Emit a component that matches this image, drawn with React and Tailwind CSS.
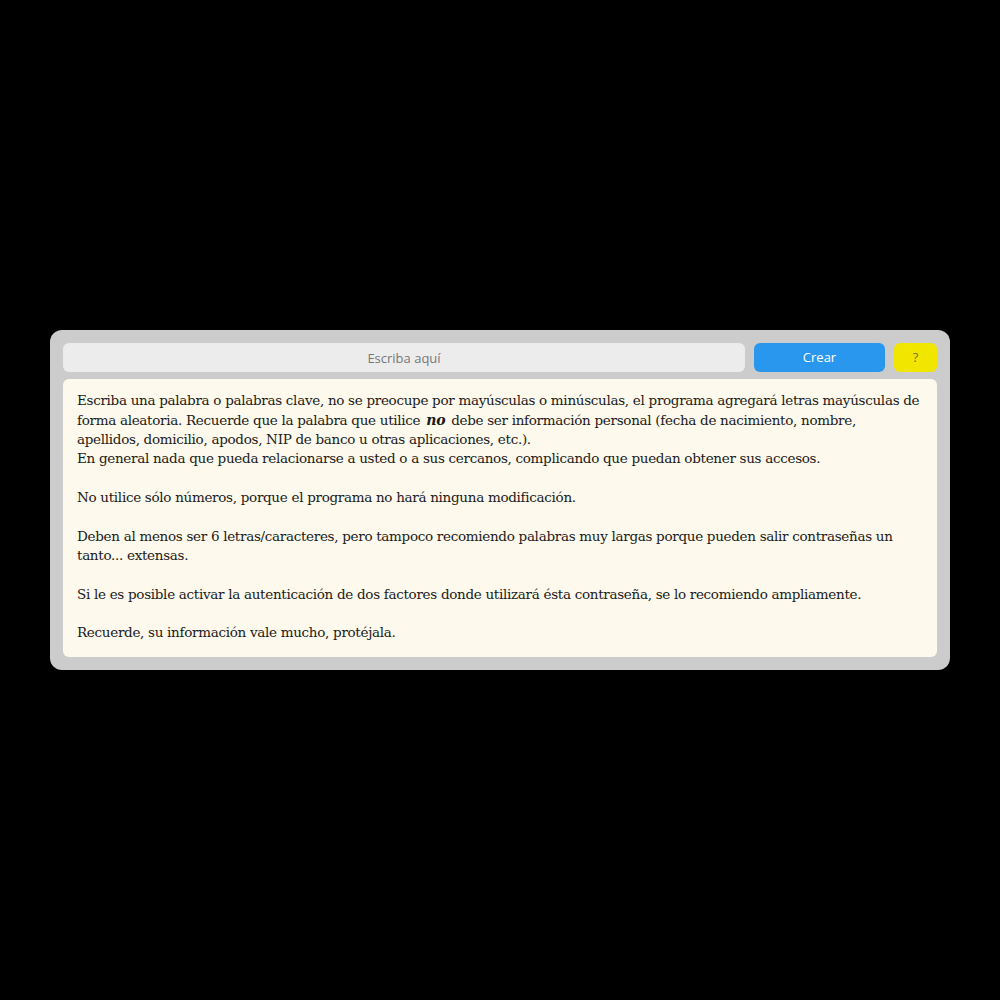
import React from 'react';

export default function App() {
    return (
        <div className="w-[1000px] h-[1000px] bg-black flex items-center justify-center">
            <div className="w-[900px] bg-[#cccccc] rounded-[12px] p-[13px] flex flex-col gap-[7px]">

                {/* Barra de entrada */}
                <div className="flex items-center gap-[9px] h-[29px]" style={{ fontFamily: '"Open Sans", "Noto Sans", sans-serif' }}>
                    <input
                        type="text"
                        placeholder="Escriba aquí"
                        className="flex-1 h-full bg-[#ececec] rounded-[6px] text-center text-[13px] text-[#555] placeholder-[#777] outline-none"
                    />
                    <button className="w-[131px] h-full bg-[#2a97ef] rounded-[6px] text-white text-[13px]">Crear</button>
                    <button className="w-[43px] h-full bg-[#f0e600] rounded-[6px] text-[#7a7400] text-[13px]">?</button>
                </div>

                {/* Texto de ayuda */}
                <div
                    className="bg-[#fdf9ec] rounded-[6px] pl-[14px] pr-[15px] pt-[12px] pb-[14px] text-[13.5px] tracking-[-0.3px] leading-[19.33px] text-[#1a1a1a]"
                    style={{ fontFamily: '"DejaVu Serif", "Liberation Serif", serif' }}
                >
                    Escriba una palabra o palabras clave, no se preocupe por mayúsculas o minúsculas, el programa agregará letras mayúsculas de forma aleatoria. Recuerde que la palabra que utilice <b className="italic text-[14px] mx-[2px]">no</b> debe ser información personal (fecha de nacimiento, nombre, apellidos, domicilio, apodos, NIP de banco u otras aplicaciones, etc.).
                    <br />
                    En general nada que pueda relacionarse a usted o a sus cercanos, complicando que puedan obtener sus accesos.
                    <br /><br />
                    No utilice sólo números, porque el programa no hará ninguna modificación.
                    <br /><br />
                    Deben al menos ser 6 letras/caracteres, pero tampoco recomiendo palabras muy largas porque pueden salir contraseñas un tanto... extensas.
                    <br /><br />
                    Si le es posible activar la autenticación de dos factores donde utilizará ésta contraseña, se lo recomiendo ampliamente.
                    <br /><br />
                    Recuerde, su información vale mucho, protéjala.
                </div>
            </div>
        </div>
    );
}
